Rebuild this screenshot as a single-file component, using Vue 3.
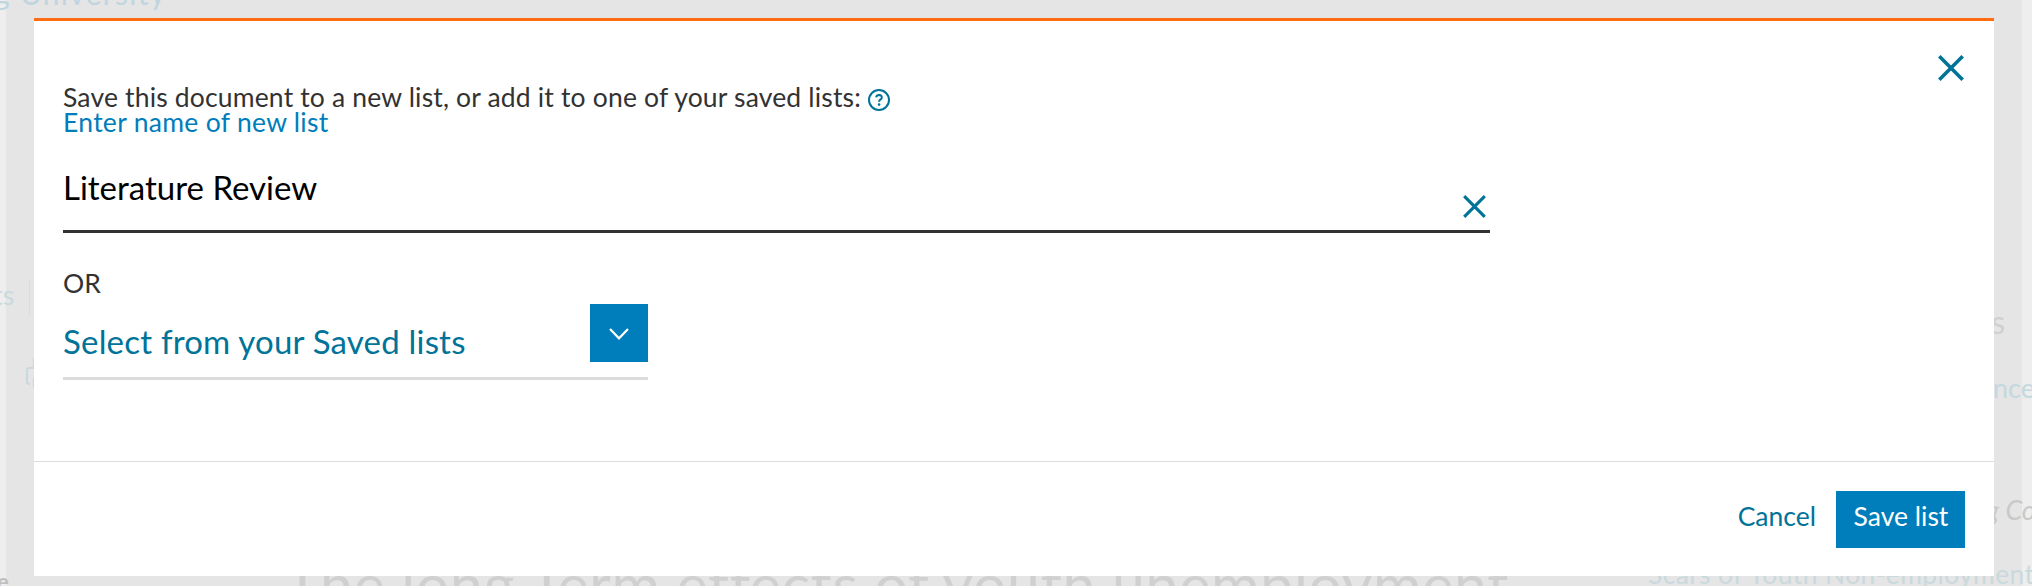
<script setup>
import { ref } from 'vue'

const listName = ref('Literature Review')
</script>

<template>
  <div class="page">
    <div class="backdrop" aria-hidden="true">
      <div class="shade"></div>
      <span class="ghost univ">g University</span>
      <span class="ghost tabs">ts</span>
      <i class="rule"></i>
      <svg class="clip" width="20" height="32" viewBox="0 0 20 32"><path d="M9 10H4Q2 10 2 12V24Q2 26 5 26M9 0V10M9 20V30" fill="none" stroke="#cad9dd" stroke-width="2.2" /></svg>
      <span class="ghost left-e">e</span>
      <span class="ghost title">The long Term effects of youth unemployment</span>
      <span class="ghost side-s">s</span>
      <span class="ghost side-nce">nce</span>
      <span class="ghost side-co"><em>g Co</em></span>
      <span class="ghost side-link">Scars of Youth Non-employment</span>
    </div>

    <section class="modal">
      <div class="body">
        <div class="fields">
          <p class="intro"><span class="t-intro">Save this document to a new list, or add it to one of your saved lists:</span>
            <svg class="help" width="22" height="22" viewBox="0 0 22 22" fill="none" stroke="#007398"><circle cx="11" cy="11" r="10" stroke-width="2" /><path d="M8.2 8.4Q8.5 6.1 11.1 6.1Q13.8 6.2 13.8 8.4Q13.8 9.7 12.3 10.6Q11.1 11.4 11.1 12.8" stroke-width="2" /><circle cx="11.1" cy="15.6" r="1.3" fill="#007398" stroke="none" /></svg>
          </p>
          <label class="label">Enter name of new list</label>
          <div class="input">
            <span class="value">{{ listName }}</span>
            <svg class="clear" width="23" height="23" viewBox="0 0 23 23"><path d="M1.2 1.2L21.8 21.8M21.8 1.2L1.2 21.8" stroke="#007398" stroke-width="3.1" /></svg>
          </div>
          <p class="or">OR</p>
          <div class="select">
            <span class="choice">Select from your Saved lists</span>
            <button class="drop"><svg width="20" height="12" viewBox="0 0 20 12"><path d="M1 1L10 10.3L19 1" fill="none" stroke="#fff" stroke-width="2.2" /></svg></button>
          </div>
        </div>
        <svg class="close" width="26" height="26" viewBox="0 0 26 26"><path d="M1.3 1.3L24.7 24.7M24.7 1.3L1.3 24.7" stroke="#007398" stroke-width="3.6" /></svg>
      </div>
      <footer class="footer">
        <span class="cancel">Cancel</span>
        <button class="save"><span>Save list</span></button>
      </footer>
    </section>
  </div>
</template>

<style>
body { margin: 0; overflow: hidden; }
</style>

<style scoped>
* { box-sizing: border-box; }
.page {
  position: relative;
  width: 2032px;
  height: 586px;
  padding: 18px 38px 0 34px;
  overflow: hidden;
  background: #eee;
  font-family: Lato, "Open Sans", sans-serif;
  font-size: 26.5px;
}
.backdrop { position: absolute; inset: 0; overflow: hidden; }
.shade { position: absolute; left: 6px; right: 10px; top: 0; bottom: 0; background: #e5e5e5; }
.ghost { position: absolute; white-space: nowrap; line-height: 1.2; color: #cad9dd; }
.univ { left: -6px; top: -25px; font-size: 30px; letter-spacing: 1.3px; color: #c0d5df; }
.tabs { left: -7px; top: 279px; font-size: 27px; }
.rule { position: absolute; left: 29px; top: 279px; width: 1px; height: 37px; background: #d8dede; }
.clip { position: absolute; left: 25px; top: 358px; }
.left-e { left: -3px; top: 569px; font-size: 22px; color: #bfbfbf; font-weight: bold; }
.title { left: 296px; top: 549px; margin-left: -11px; font-size: 59px; letter-spacing: 0.7px; color: #d0d0d0; }
.side-s { left: 1991px; top: 302px; font-size: 33px; color: #d0d0d0; }
.side-nce { left: 1993px; top: 372px; font-size: 27px; color: #c3d8df; }
.side-co { left: 1986px; top: 494px; font-size: 27px; color: #c9c9c9; }
.side-link { left: 1648px; top: 559px; font-size: 26.5px; letter-spacing: 0.35px; }

.modal {
  position: relative;
  width: 1960px;
  height: 558px;
  border-top: 3px solid #ff6c12;
  background: #fff;
}
.body {
  display: flex;
  justify-content: space-between;
  height: 440px;
  padding: 34px 30px 0 29px;
}
.fields { width: 1427px; padding-top: 30px; color: #323232; }
p { margin: 0; }
.intro { display: flex; align-items: center; height: 25px; line-height: 25px; white-space: nowrap; }
.t-intro { letter-spacing: 0.17px; }
.help { margin: 4px 0 0 7px; }
.label { display: block; height: 25px; line-height: 25px; letter-spacing: 0.3px; color: #007dbb; }
.input {
  display: flex;
  justify-content: space-between;
  height: 98px;
  padding-right: 4px;
  border-bottom: 3px solid #323232;
}
.value { margin-top: 32px; font-size: 33px; line-height: 40px; color: #000; }
.clear { margin-top: 60px; }
.or { margin-top: 38px; height: 25px; line-height: 25px; }
.select {
  display: flex;
  justify-content: space-between;
  width: 585px;
  height: 76px;
  margin-top: 8px;
  border-bottom: 3px solid #dcdcdc;
}
.choice { margin-top: 17px; font-size: 33px; line-height: 40px; letter-spacing: 0.2px; color: #007398; white-space: nowrap; }
.drop {
  display: flex;
  align-items: center;
  justify-content: center;
  width: 58px;
  height: 58px;
  padding: 2px 0 0;
  border: 0;
  background: #007dbb;
}
.close { flex: none; }
.footer {
  display: flex;
  justify-content: flex-end;
  height: 115px;
  padding: 29px 29px 0;
  border-top: 1px solid #dcdcdc;
}
.cancel { margin: 10px 20px 0 0; line-height: 30px; color: #007398; }
.save {
  display: flex;
  justify-content: center;
  width: 129px;
  height: 57px;
  padding: 10px 0 0 1px;
  border: 0;
  background: #007dbb;
  color: #fff;
  font: inherit;
  line-height: 30px;
  white-space: nowrap;
}
</style>
